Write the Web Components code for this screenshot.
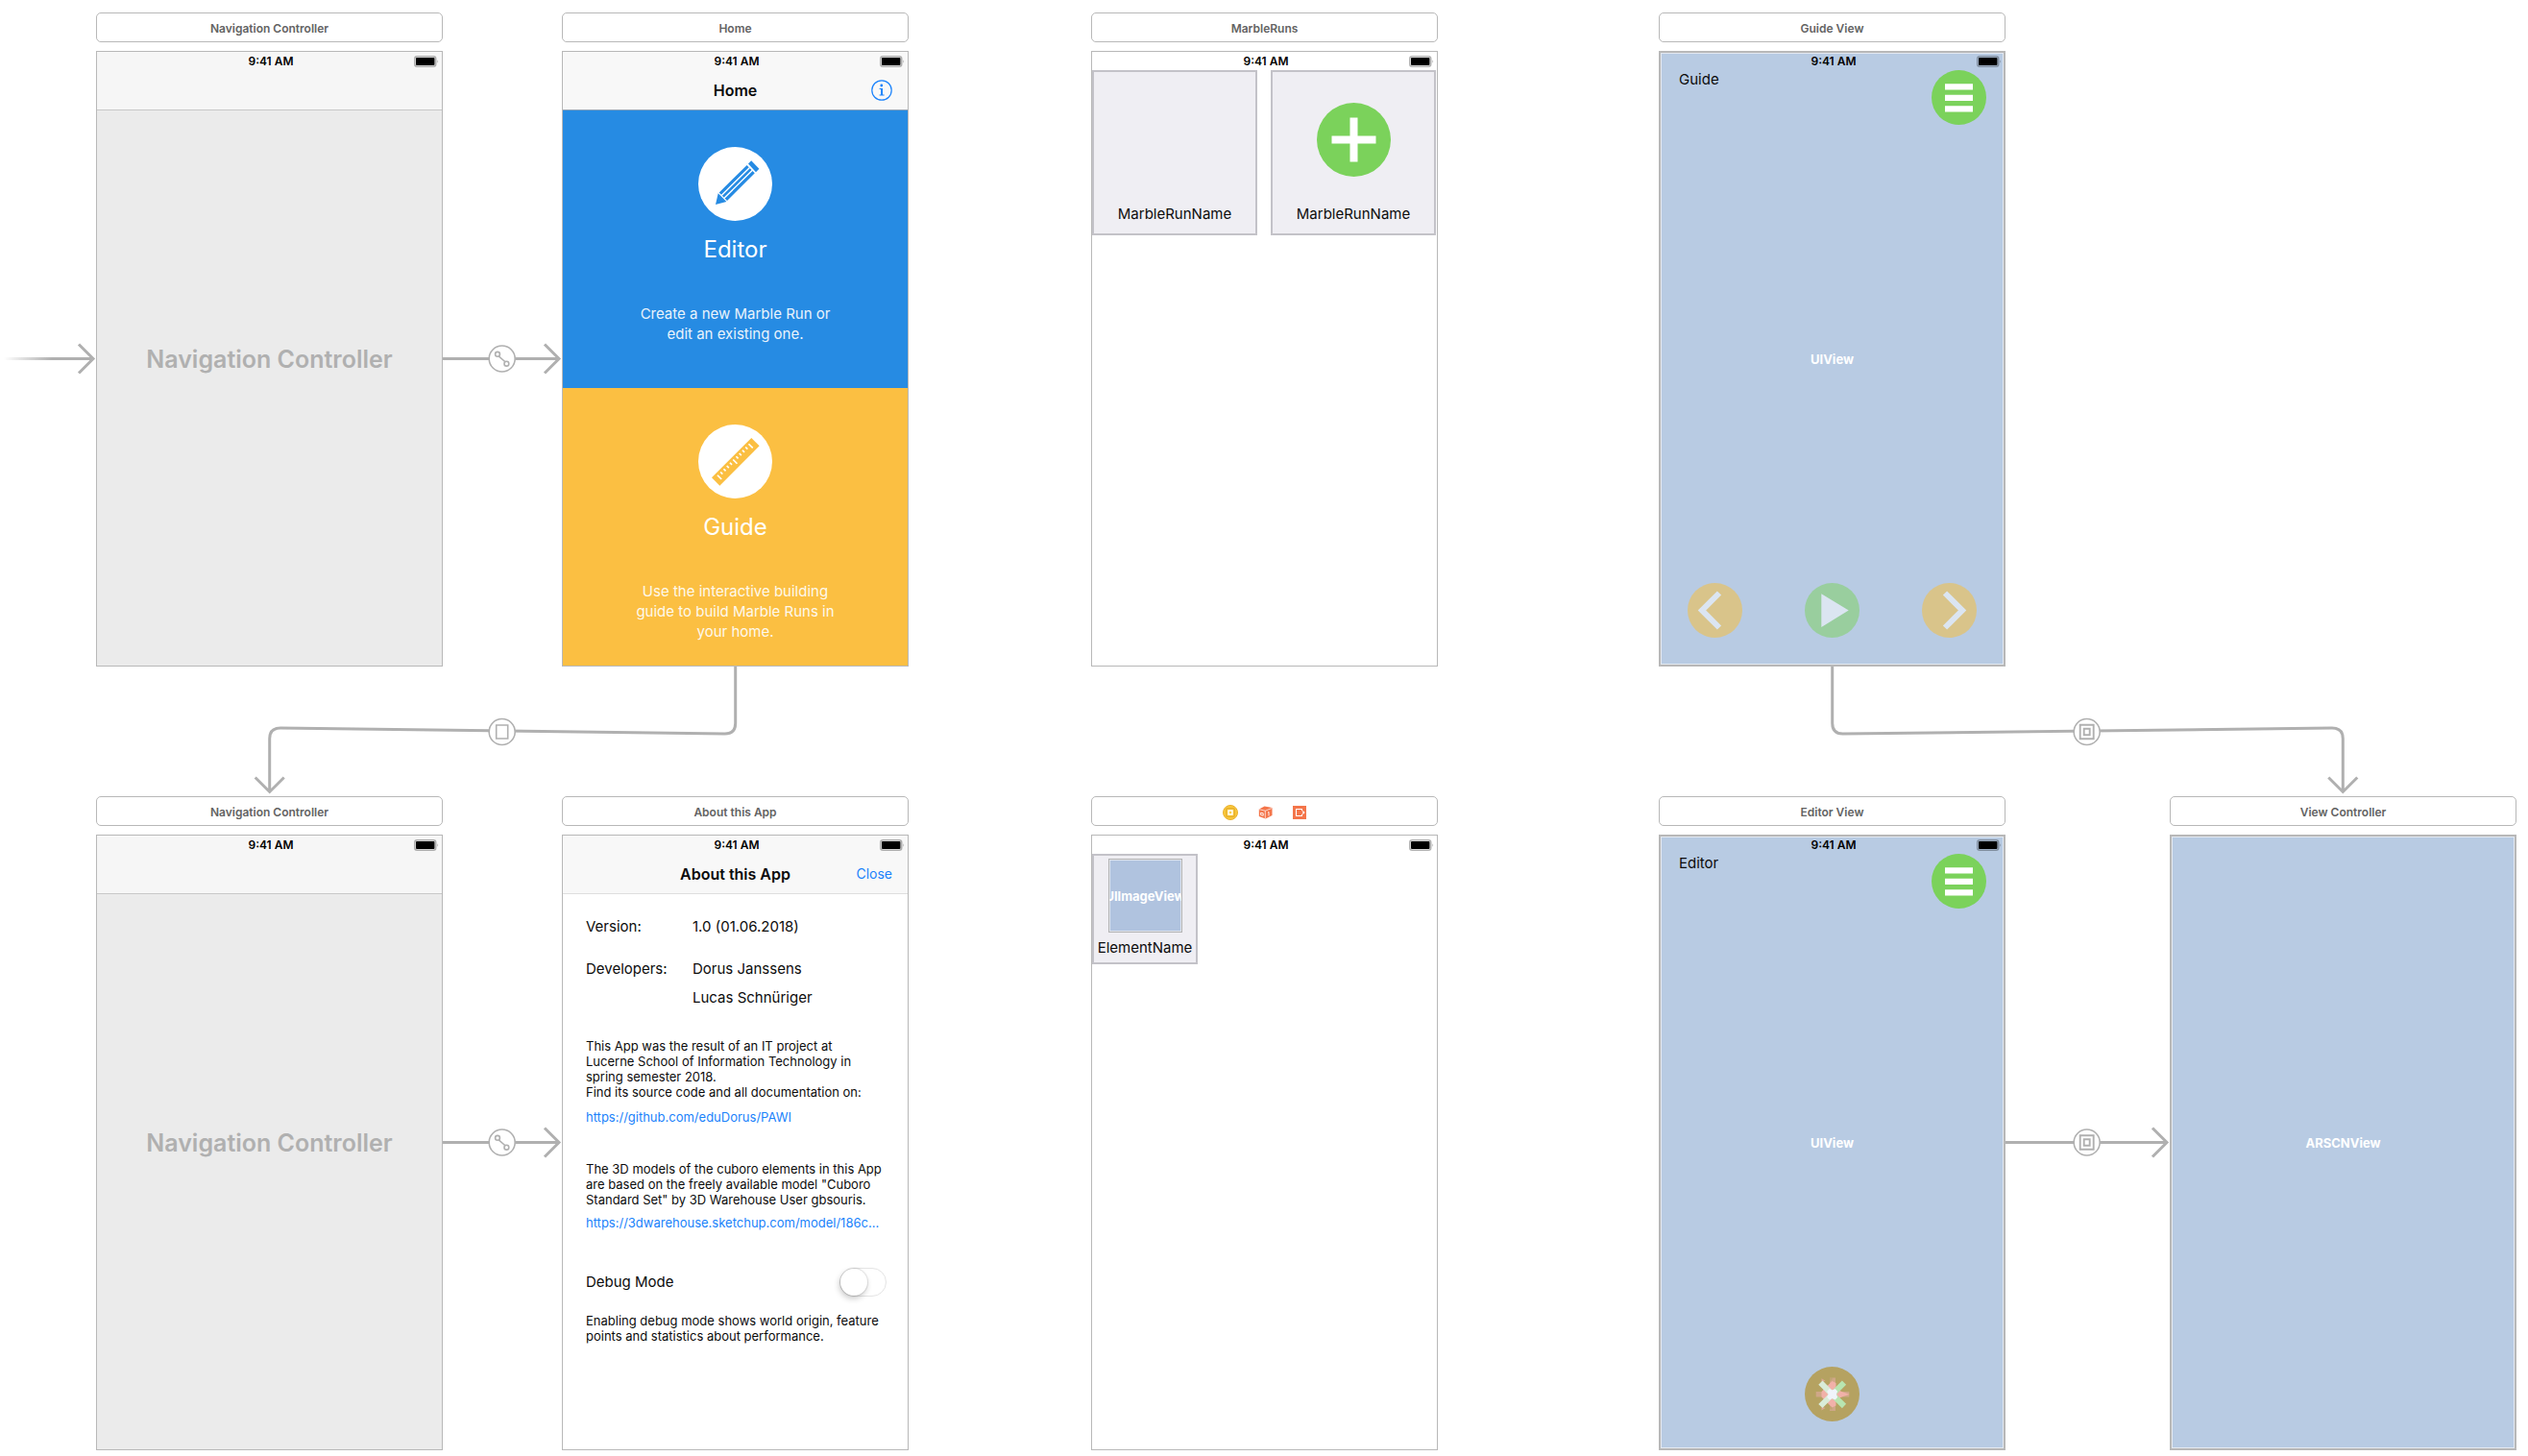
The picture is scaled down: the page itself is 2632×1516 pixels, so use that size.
<!DOCTYPE html>
<html lang="en">
<head>
<meta charset="utf-8">
<title>Main.storyboard</title>
<style>
  body { margin: 0; background: #fff; font-family: Inter, "Liberation Sans", sans-serif; }
</style>
</head>
<body>
<story-board></story-board>

<script>
const define = (name, html, setup) => {
  const template = document.createElement('template');
  template.innerHTML = html;
  customElements.define(name, class extends HTMLElement {
    constructor() {
      super();
      this.attachShadow({ mode: 'open' });
    }
    connectedCallback() {
      if (this.shadowRoot.childNodes.length) return;
      this.shadowRoot.append(template.content.cloneNode(true));
      if (setup) setup(this, this.shadowRoot);
    }
  });
};

/* Time and battery strip at the top of each screen */
define('status-bar', `
<style>
  :host { display: grid; grid-template-columns: 1fr auto 1fr; align-items: center; height: 19px; padding: 0 3px 0 6px;
          font-size: 12px; line-height: 19px; font-weight: 600; color: #000; }
  time { grid-column: 2; }
  svg { justify-self: end; display: block; }
</style>
<time>9:41 AM</time>
<svg width="26" height="12" viewBox="0 0 26 12" aria-hidden="true">
  <rect x=".75" y=".75" width="22" height="10.5" rx="2.5" fill="none" stroke="#000" stroke-opacity=".3" stroke-width="1.5"/>
  <rect x="2" y="2" width="19.5" height="8" rx="1" fill="#000"/>
  <path d="M24.5 4.2q1.4 1.8 0 3.6z" fill="#000" fill-opacity=".4"/>
</svg>`);

define('nav-bar', `
<style>
  :host { display: grid; grid-template-columns: 1fr auto 1fr; align-items: center; height: 41px; padding: 0 16px;
          border-bottom: 1px solid var(--line, #c8c8c8); font-size: 16px; line-height: 20px; }
  h2 { grid-column: 2; margin: 0; font-size: inherit; font-weight: 600; color: #0c0c0c; }
  div { justify-self: end; display: flex; }
</style>
<h2><slot></slot></h2><div><slot name="action"></slot></div>`);

/* A scene: the title bar above and the device screen under it */
define('storyboard-scene', `
<style>
  :host { display: flex; flex-direction: column; gap: 9px; width: 361px; }
  header { box-sizing: border-box; height: 31px; border: 1px solid #b8b8b8; border-radius: 5px; background: #fff;
           display: flex; align-items: center; justify-content: center; gap: 21px; padding-top: 2px;
           font-size: 12px; line-height: 16px; font-weight: 600; color: #636363; }
  main { box-sizing: border-box; height: 641px; border: 1px solid #b8b8b8; background: #fff; position: relative;
         display: flex; flex-direction: column; }
  .body { flex: 1; display: flex; flex-direction: column; min-height: 0; }
  :host([kind=controller]) main { background: #ebebeb; }
  :host([kind=bar]) .bar { background: #f8f8f8; }
  :host([kind=controller]) .bar { background: #f6f6f6; }
  :host([kind=view]) main { background: #b8cbe3; box-shadow: inset 0 0 0 1px #b8b8b8, inset 0 0 0 2px #e2e8f0; }
  .label { position: absolute; inset: 0; display: flex; align-items: center; justify-content: center; pointer-events: none;
           font-size: 13px; line-height: 16px; font-weight: 700; color: #fff; }
  :host([kind=controller]) .label { font-size: 25px; line-height: 32px; font-weight: 600; color: #b0b0b0; }
</style>
<header><slot name="title"></slot></header>
<main>
  <div class="bar"><slot name="bar"></slot></div>
  <div class="body"><slot></slot></div>
  <div class="label"><slot name="label"></slot></div>
</main>`);

define('home-tile', `
<style>
  :host { flex: 1 1 0; box-sizing: border-box; display: flex; flex-direction: column; align-items: center; padding-top: 38px;
          background: var(--tint); color: #fff; text-align: center; }
  svg { display: block; width: 77px; height: 77px; color: var(--tint); }
  h3 { margin: 16px 0 42px; font-size: 24px; line-height: 28px; font-weight: 400; }
  p { margin: 0; width: 240px; font-size: 15px; line-height: 21px; opacity: .9; }
</style>
<svg viewBox="0 0 77 77" aria-hidden="true"></svg>
<h3><slot name="name"></slot></h3>
<p><slot></slot></p>`, (host, root) => {
  const ticks = Array.from({ length: 11 }, (_, i) => `M${6 + i * 4.6} 2.4v${i % 5 ? 3 : 6}`).join('');
  const art = {
    pencil: `<path fill="currentColor" d="M18 60l2.7-11.7L29.4 57z M21.7 47.4L50.6 18.9l8.2 8.3L30 56z M52 17.5l3.2-3.3 8.2 8.6-3.4 3.4z"/>
             <path stroke="#fff" stroke-width="1.4" d="M24.2 50.5l29.3-29M27 53.3l29.3-29"/>`,
    ruler: `<g transform="translate(14 55.3) rotate(-45)"><path fill="currentColor" d="M0 0h58.4v11.8H0z"/>
            <path stroke="#fff" stroke-width="1.7" d="${ticks}"/></g>`
  };
  root.querySelector('svg').innerHTML = '<circle cx="38.5" cy="38.5" r="38.5" fill="#fff"/>' + art[host.getAttribute('icon')];
});

/* Round floating button */
define('round-button', `
<style>
  :host { display: block; }
  :host([dim]) { opacity: .5; }
  button { display: block; border: 0; margin: 0; padding: 0; background: none; }
  svg { display: block; width: 57px; height: 57px; }
</style>
<button type="button"><svg viewBox="0 0 57 57" aria-hidden="true"></svg></button>`, (host, root) => {
  const disc = c => `<circle cx="28.5" cy="28.5" r="28.5" fill="${c}"/>`;
  const chevron = d => disc('#fbbf34') + `<path d="${d}" fill="none" stroke="#fff" stroke-width="6"/>`;
  const art = {
    menu: disc('#7bd25b') + '<path fill="#fff" d="M14 14.3h29v6.3H14zM14 25.7h29V32H14zM14 37.3h29v6.3H14z"/>',
    back: chevron('M33 10.5l-18 18 18 18'),
    forward: chevron('M24 10.5l18 18-18 18'),
    play: disc('#7bd25b') + '<path fill="#fff" d="M17.3 11.3v34.6l28.4-17.3z"/>',
    blend: disc('#b5a261') +
      `<path fill="#cfa787" d="M26 11.5h6v34.5h-6zM11.7 26h34.6v5.6H11.7z"/>
       <path fill="#f1b1a9" d="M17.5 26l11-11 4 2v6l6 3 8 2.700-8 2.700-6 3v6l-4 2-11-11z"/>
       <path fill="#dba790" d="M17.5 12.300l4 2.400-4 1.300zM17.500 45.500l4-2.400-4-1.300z"/>
       <path fill="#b5a261" d="M20 22l8.700-8.700v-1.800h-2.700v4l-6 5zM20 35.500l6 5v4h2.700v-1.800z" fill-opacity=".5"/>
       <path stroke="#b8e5b0" stroke-width="6" d="M28.7 28.8L41 16.6M28.7 28.8L41 41"/>
       <path stroke="#d9ecd8" stroke-width="6" d="M16.4 16.6l15 15M16.4 41l15-15"/>
       <path fill="#f0f4fa" d="M28.7 24.500l3-1.500 2.500 2.700-1.500 3 1.500 3-2.500 2.700-3-1.500-3 1.500-2.500-2.700 1.500-3-1.500-3 2.500-2.700z"/>`
  };
  root.querySelector('svg').innerHTML = art[host.getAttribute('icon')];
  root.querySelector('button').setAttribute('aria-label', host.getAttribute('icon'));
});

/* Overlay of an ARKit view: caption and menu on top, controls at the bottom */
define('view-overlay', `
<style>
  :host { flex: 1; display: flex; flex-direction: column; justify-content: space-between; padding-bottom: 29px; }
  .top { display: flex; justify-content: space-between; padding: 0 19px 0 20px; font-size: 15px; line-height: 20px; color: #0c0c0c; }
  .controls { display: flex; justify-content: var(--controls, space-between); padding: 0 29px; }
</style>
<div class="top"><slot name="caption"></slot><round-button icon="menu"></round-button></div>
<div class="controls"><slot></slot></div>`);

define('cell-grid', `
<style>
  :host { display: flex; justify-content: space-between; padding-right: 1px; }
</style><slot></slot>`);

define('collection-cell', `
<style>
  :host { box-sizing: border-box; width: 172px; height: 172px; border: 2px solid #c3c2c8; background: #efeef3;
          display: flex; flex-direction: column; align-items: center; justify-content: flex-end; gap: 29px; padding-bottom: 10px;
          font-size: 15px; line-height: 20px; color: #0c0c0c; white-space: nowrap; }
  :host([small]) { width: 110px; height: 115px; gap: 6px; padding-bottom: 5px; }
</style><slot name="image"></slot><span><slot></slot></span>`);

define('plus-icon', `
<style>:host, svg { display: block; } svg { width: 77px; height: 77px; }</style>
<svg viewBox="0 0 77 77" aria-hidden="true"><circle cx="38.5" cy="38.5" r="38.5" fill="#7bd25b"/>
<path fill="#fff" d="M34.5 15.5h8v46h-8zM15.5 34.5h46v8h-46z"/></svg>`);

define('image-view', `
<style>
  :host { box-sizing: border-box; width: 77px; height: 77px; border: 1px solid #b4b4b4; box-shadow: inset 0 0 0 1px #dfe4ec;
          background: #b0c3df; display: flex; align-items: center; justify-content: center; overflow: hidden;
          font-size: 13px; line-height: 16px; font-weight: 700; color: #fff; white-space: nowrap; }
</style><slot></slot>`);

define('toggle-switch', `
<style>
  :host { display: flex; align-items: center; justify-content: space-between; height: 30px; font-size: 15px; line-height: 20px; }
  input { appearance: none; box-sizing: border-box; margin: 0; width: 49px; height: 30px; border: 1px solid #e4e4e4;
          border-radius: 15px; background: #fff; display: flex; }
  input::before { content: ""; width: 28px; height: 28px; border-radius: 14px; background: #fff;
          box-shadow: 0 0 1px 1px rgba(0,0,0,.1), -1px 3px 6px rgba(0,0,0,.22); }
  input:checked { justify-content: flex-end; background: #4cd964; }
</style>
<label for="s"><slot></slot></label><input id="s" type="checkbox" role="switch">`);

define('about-page', `
<style>
  :host { display: block; padding: 24px 22px 0 24px; font-size: 13px; line-height: 16px; color: #0c0c0c; white-space: nowrap; }
  dl { margin: 0 0 32px; display: grid; grid-template-columns: 111px 1fr; row-gap: 24px; font-size: 15px; line-height: 20px; }
  dd { margin: 0; display: flex; flex-direction: column; gap: 10px; }
  p { margin: 0; }
  a { display: block; color: #1a82fb; text-decoration: none; overflow: hidden; text-overflow: ellipsis; }
  .source { margin: 10px 0 38px; }
  .models { margin: 8px 0 39px; }
  toggle-switch { margin-bottom: 17px; }
</style>
<dl>
  <dt>Version:</dt><dd><span>1.0 (01.06.2018)</span></dd>
  <dt>Developers:</dt><dd><span>Dorus Janssens</span><span>Lucas Schnüriger</span></dd>
</dl>
<p>This App was the result of an IT project at<br>Lucerne School of Information Technology in<br>spring semester 2018.<br>Find its source code and all documentation on:</p>
<a class="source" href="#source">https://github.com/eduDorus/PAWI</a>
<p>The 3D models of the cuboro elements in this App<br>are based on the freely available model "Cuboro<br>Standard Set" by 3D Warehouse User gbsouris.</p>
<a class="models" href="#models">https://3dwarehouse.sketchup.com/model/186c...</a>
<toggle-switch>Debug Mode</toggle-switch>
<p>Enabling debug mode shows world origin, feature<br>points and statistics about performance.</p>`);

/* Arrows between the scenes */
define('segue-layer', `
<style>
  :host, svg { display: block; }
  svg { width: 2632px; height: 1516px; fill: none; stroke: #b0b0b0; stroke-width: 3; }
  .badge circle { fill: #fff; stroke-width: 1.6; }
  .badge { stroke-width: 1.6; }
</style>
<svg viewBox="0 0 2632 1516" aria-hidden="true">
  <defs><linearGradient id="fade" gradientUnits="userSpaceOnUse" x1="4" y1="0" x2="54" y2="0">
    <stop offset="0" stop-color="#b0b0b0" stop-opacity="0"/><stop offset="1" stop-color="#b0b0b0"/></linearGradient>
    <g id="push" class="badge"><circle r="13.5"/><path d="M-3.5-2.7L3 3"/><circle cx="-4.7" cy="-4.7" r="2.4"/><circle cx="4.7" cy="5.2" r="2.4"/></g>
    <g id="show" class="badge"><circle r="13.5"/><path d="M-7-7.2H7V7.2H-7z M-3-3.2h6v6.4h-6z" stroke-width="1.9"/></g>
    <g id="modal" class="badge"><circle r="13.5"/><path d="M-6-7H6V7H-6z"/></g>
  </defs>
  <path fill="url(#fade)" stroke="none" d="M4 372h92v3H4z"/>
  <path d="M82 358.500l15 15-15 15"/>
  <path d="M461 373.500H582M567 358.500l15 15-15 15"/>
  <path d="M461 1189.500H582M567 1174.500l15 15-15 15"/>
  <path d="M2088 1189.500H2256M2241 1174.500l15 15-15 15"/>
  <path d="M765.700 694V753q0 11-11 11L292 758q-11.300 0-11.300 11V824M265.700 809.500l15 15 15-15"/>
  <path d="M1907.700 694V753q0 11 11 11L2428 758q11.300 0 11.300 11V824M2424.300 809.500l15 15 15-15"/>
  <use href="#push" x="522.700" y="373.500"/><use href="#push" x="522.700" y="1189.500"/>
  <use href="#modal" x="522.700" y="762"/><use href="#show" x="2172.700" y="762"/><use href="#show" x="2172.700" y="1189.500"/>
</svg>`);

/* The free canvas on which the scenes are placed */
define('story-board', `
<style>
  :host { display: block; position: relative; background: #fff; overflow: hidden; }
  storyboard-scene { position: absolute; left: var(--x); top: var(--y); }
  .row1 { --y: 13px; } .row2 { --y: 829px; }
  .plain { border: 0; padding: 0; background: none; font: inherit; font-size: 14px; color: #1a82fb; display: block; }
  .plain svg, .owner { display: block; }
</style>
<segue-layer></segue-layer>

<storyboard-scene kind="controller" class="row1" style="--x:100px">
  <span slot="title">Navigation Controller</span>
  <status-bar slot="bar"></status-bar><nav-bar slot="bar"></nav-bar>
  <span slot="label">Navigation Controller</span>
</storyboard-scene>

<storyboard-scene kind="bar" class="row1" style="--x:585px">
  <span slot="title">Home</span>
  <status-bar slot="bar"></status-bar>
  <nav-bar slot="bar" style="--line:#8fa3b8">Home
    <button slot="action" class="plain" type="button" aria-label="Info">
      <svg width="22" height="22" viewBox="0 0 22 22"><circle cx="11" cy="11" r="10.200" fill="none" stroke="#1a82fb" stroke-width="1.200"/>
      <circle cx="10.800" cy="6" r="1.400" fill="#1a82fb"/><path d="M8.600 9h3.400v6.600h1.600v1H8.600v-1h1.500V10H8.600z" fill="#1a82fb"/></svg>
    </button>
  </nav-bar>
  <home-tile icon="pencil" style="--tint:#268be3"><span slot="name">Editor</span>Create a new Marble Run or<br>edit an existing one.</home-tile>
  <home-tile icon="ruler" style="--tint:#fbbf42"><span slot="name">Guide</span>Use the interactive building<br>guide to build Marble Runs in<br>your home.</home-tile>
</storyboard-scene>

<storyboard-scene class="row1" style="--x:1136px">
  <span slot="title">MarbleRuns</span>
  <status-bar slot="bar"></status-bar>
  <cell-grid>
    <collection-cell>MarbleRunName</collection-cell>
    <collection-cell><plus-icon slot="image"></plus-icon>MarbleRunName</collection-cell>
  </cell-grid>
</storyboard-scene>

<storyboard-scene kind="view" class="row1" style="--x:1727px">
  <span slot="title">Guide View</span>
  <status-bar slot="bar"></status-bar>
  <view-overlay><span slot="caption">Guide</span>
    <round-button icon="back" dim></round-button><round-button icon="play" dim></round-button><round-button icon="forward" dim></round-button>
  </view-overlay>
  <span slot="label">UIView</span>
</storyboard-scene>

<storyboard-scene kind="controller" class="row2" style="--x:100px">
  <span slot="title">Navigation Controller</span>
  <status-bar slot="bar"></status-bar><nav-bar slot="bar"></nav-bar>
  <span slot="label">Navigation Controller</span>
</storyboard-scene>

<storyboard-scene kind="bar" class="row2" style="--x:585px">
  <span slot="title">About this App</span>
  <status-bar slot="bar"></status-bar>
  <nav-bar slot="bar" style="--line:#dedede">About this App<button slot="action" class="plain" type="button">Close</button></nav-bar>
  <about-page></about-page>
</storyboard-scene>

<storyboard-scene class="row2" style="--x:1136px">
  <svg slot="title" class="owner" width="16" height="16" viewBox="0 0 16 16"><circle cx="8" cy="8" r="7.500" fill="#fac83a" stroke="#e9b02e"/>
    <path d="M3.800 3.800h8.400v8.400H3.800z" fill="none" stroke="#e0a92c"/><path d="M6 6h4v4H6z" fill="#fbd250" stroke="#fff" stroke-width="1.500"/></svg>
  <svg slot="title" class="owner" width="15" height="14" viewBox="0 0 15 14"><path fill="#f4754a" d="M.8 3.400L6.500.4l8 1.700v8L7.600 13.600.8 11z"/>
    <path fill="none" stroke="#fff" stroke-width=".7" d="M1 3.700l6.300 1.500 7-2.700M7.300 5.200V13.300"/><path fill="none" stroke="#fff" stroke-width=".9" d="M2.600 7.200l2.600.6v2.400l-2.600-.7zM10 7l1-.5v4"/></svg>
  <svg slot="title" class="owner" width="14" height="14" viewBox="0 0 14 14"><path fill="#f4754a" d="M0 0h14v14H0z"/>
    <path fill="none" stroke="#fff" stroke-width="1.100" d="M9.500 5.300V3.500h-6v7h6V8.700"/><path fill="#fff" d="M10.300 4.800L12.700 7l-2.400 2.200z"/></svg>
  <status-bar slot="bar"></status-bar>
  <cell-grid><collection-cell small><image-view slot="image">UIImageView</image-view>ElementName</collection-cell></cell-grid>
</storyboard-scene>

<storyboard-scene kind="view" class="row2" style="--x:1727px">
  <span slot="title">Editor View</span>
  <status-bar slot="bar"></status-bar>
  <view-overlay style="--controls:center"><span slot="caption">Editor</span><round-button icon="blend"></round-button></view-overlay>
  <span slot="label">UIView</span>
</storyboard-scene>

<storyboard-scene kind="view" class="row2" style="--x:2259px">
  <span slot="title">View Controller</span>
  <span slot="label">ARSCNView</span>
</storyboard-scene>`);
</script>
</body>
</html>
